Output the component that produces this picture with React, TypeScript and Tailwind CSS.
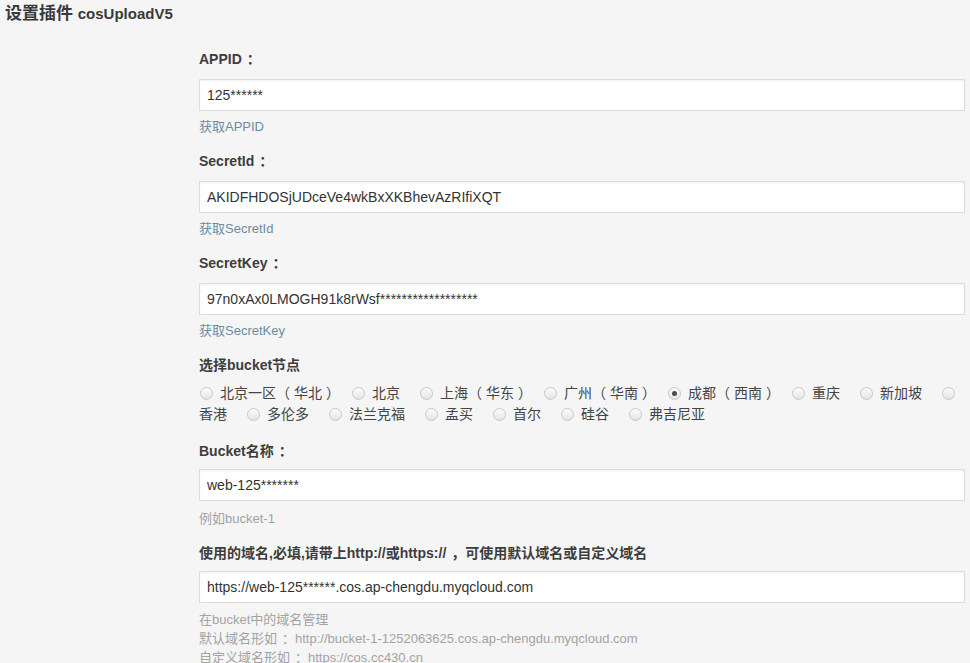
import { FC, ReactNode } from "react";

// full-width punctuation: the reference font draws it centred in its box
const Colon: FC = () => <span className="pl-[5px]">：</span>;
const Open: FC = () => <span className="pr-[4px]">（</span>;
const Close: FC = () => <span className="pl-[4px]">）</span>;

type FieldProps = {
  label: ReactNode;
  value: string;
  help?: string;
  link?: boolean;
  tight?: boolean;
};

const Label: FC<{ children: ReactNode }> = ({ children }) => (
  <p className="h-[20px] leading-[20px] text-[14px] font-bold text-[#3d3d3d] whitespace-nowrap">{children}</p>
);

const Field: FC<FieldProps> = ({ label, value, help, link, tight }) => {
  return (
    <div className="flex flex-col">
      <Label>{label}</Label>
      <input
        readOnly
        value={value}
        className={
          (tight ? "mt-[8px] " : "mt-[10px] ") +
          "h-[32px] w-full bg-white border border-[#dcdcdc] shadow-[inset_0_1px_2px_rgba(0,0,0,0.06)] pl-[7px] text-[14px] text-[#333] outline-none"
        }
      />
      {help && (
        <p
          className={
            (tight ? "mt-[8px] " : "mt-[6px] ") +
            (link
              ? "h-[20px] leading-[20px] text-[13px] text-[#6a8ca3]"
              : "h-[20px] leading-[20px] text-[13px] text-[#a3a3a3]")
          }
        >
          {help}
        </p>
      )}
    </div>
  );
};

const Radio: FC<{ checked?: boolean }> = ({ checked }) => (
  <span className="inline-flex items-center justify-center w-[13px] h-[13px] rounded-full border border-[#c8c8c8] bg-linear-to-b from-[#fcfcfc] to-[#e4e4e4] shrink-0">
    {checked && <span className="w-[5px] h-[5px] rounded-full bg-[#4a4a4a]" />}
  </span>
);

const row1: { name: ReactNode; key: string; checked?: boolean; paren?: boolean }[] = [
  { key: "bj1", name: <>北京一区<Open />华北<Close /></>, paren: true },
  { key: "bj", name: "北京" },
  { key: "sh", name: <>上海<Open />华东<Close /></>, paren: true },
  { key: "gz", name: <>广州<Open />华南<Close /></>, paren: true },
  { key: "cd", name: <>成都<Open />西南<Close /></>, checked: true, paren: true },
  { key: "cq", name: "重庆" },
  { key: "sg", name: "新加坡" },
];

const row2 = ["多伦多", "法兰克福", "孟买", "首尔", "硅谷", "弗吉尼亚"];

export default function App() {
  return (
    <div className="min-h-screen bg-[#f5f5f5] font-['Liberation_Sans','Noto_Sans_CJK_SC',sans-serif] text-[#333]">
      <h1 className="pt-[4px] pl-[5px] h-[24px] leading-[20px] text-[17px] font-bold text-[#3a3a3a] whitespace-nowrap">
        设置插件 <span className="text-[15px]">cosUploadV5</span>
      </h1>

      <div className="ml-[199px] mr-[5px] mt-[25px] flex flex-col gap-[14px]">
        <Field label={<>APPID<Colon /></>} value="125******" help="获取APPID" link />
        <Field label={<>SecretId<Colon /></>} value="AKIDFHDOSjUDceVe4wkBxXKBhevAzRIfiXQT" help="获取SecretId" link />
        <Field label={<>SecretKey<Colon /></>} value="97n0xAx0LMOGH91k8rWsf******************" help="获取SecretKey" link />

        <div className="flex flex-col">
          <Label>选择bucket节点</Label>
          <div className="mt-[8px] flex flex-col text-[14px] text-[#444]">
            <div className="flex items-center h-[21px] pl-[1px]">
              {row1.map((r) => (
                <span key={r.key} className={r.paren ? "flex items-center mr-[12px]" : "flex items-center mr-[20px]"}>
                  <Radio checked={r.checked} />
                  <span className="ml-[7px]">{r.name}</span>
                </span>
              ))}
              <Radio />
            </div>
            <div className="flex items-center h-[21px]">
              <span className="mr-[20px]">香港</span>
              {row2.map((n) => (
                <span key={n} className="flex items-center mr-[20px]">
                  <Radio />
                  <span className="ml-[7px]">{n}</span>
                </span>
              ))}
            </div>
          </div>
        </div>

        <div className="mt-[2px]">
          <Field label={<>Bucket名称<Colon /></>} value="web-125*******" help="例如bucket-1" tight />
        </div>

        <div className="flex flex-col">
          <Label>
            使用的域名,必填,请带上http://或https://<span className="pl-[5px]">，</span>可使用默认域名或自定义域名
          </Label>
          <input
            readOnly
            value="https://web-125******.cos.ap-chengdu.myqcloud.com"
            className="mt-[8px] h-[32px] w-full bg-white border border-[#dcdcdc] shadow-[inset_0_1px_2px_rgba(0,0,0,0.06)] pl-[7px] text-[14px] text-[#333] outline-none"
          />
          <div className="mt-[7px] text-[13px] leading-[19px] text-[#a3a3a3]">
            <p>在bucket中的域名管理</p>
            <p>
              默认域名形如<Colon />http://bucket-1-1252063625.cos.ap-chengdu.myqcloud.com
            </p>
            <p>
              自定义域名形如<Colon />https://cos.cc430.cn
            </p>
          </div>
        </div>
      </div>
    </div>
  );
}
